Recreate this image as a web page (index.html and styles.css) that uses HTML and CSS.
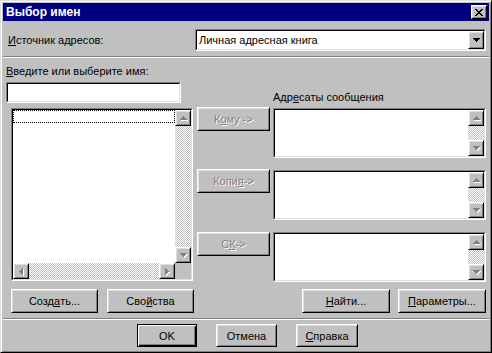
FILE: index.html
```html
<!DOCTYPE html>
<html lang="ru">
<head>
<meta charset="utf-8">
<title>Выбор имен</title>
<link rel="stylesheet" href="styles.css">
</head>
<body>
<div class="window">
  <div class="titlebar">
    <span class="title">Выбор имен</span>
    <div class="raised close">
      <svg width="8" height="7" viewBox="0 0 8 7"><path d="M0 0h2v1H0zM6 0h2v1H6zM1 1h2v1H1zM5 1h2v1H5zM2 2h4v1H2zM3 3h2v1H3zM2 4h4v1H2zM1 5h2v1H1zM5 5h2v1H5zM0 6h2v1H0zM6 6h2v1H6z" fill="#000"/></svg>
    </div>
  </div>
  <div class="body">
    <div class="source-row">
      <span class="label"><u>И</u>сточник адресов:</span>
      <div class="sunken combo">
        <div class="sunken-in combo-in">
          <span class="combo-text">Личная адресная книга</span>
          <div class="raised sbtn"><svg width="7" height="4" viewBox="0 0 7 4"><path d="M0 0h7v1H6v1H5v1H4v1H3V3H2V2H1V1H0z" fill="#000"/></svg></div>
        </div>
      </div>
    </div>
    <div class="sep"></div>
    <div class="main">
      <div class="col col-left">
        <div class="label lbl-enter"><u>В</u>ведите или выберите имя:</div>
        <div class="sunken input"><div class="sunken-in"></div></div>
        <div class="sunken list">
          <div class="sunken-in list-in">
            <div class="list-content"><div class="focus-row"></div></div>
            <div class="vscroll">
              <div class="raised sbtn sq"><svg class="dis" width="7" height="4" viewBox="0 0 7 4"><path d="M3 0h1v1h1v1h1v1h1v1H0V3h1V2h1V1h1z"/></svg></div>
              <div class="track"></div>
              <div class="raised sbtn sq"><svg class="dis" width="7" height="4" viewBox="0 0 7 4"><path d="M0 0h7v1H6v1H5v1H4v1H3V3H2V2H1V1H0z"/></svg></div>
            </div>
            <div class="hscroll">
              <div class="raised sbtn sq"><svg class="dis" width="4" height="7" viewBox="0 0 4 7"><path d="M3 0h1v7H3V6H2V5H1V4H0V3h1V2h1V1h1z"/></svg></div>
              <div class="track"></div>
              <div class="raised sbtn sq"><svg class="dis" width="4" height="7" viewBox="0 0 4 7"><path d="M0 0h1v1h1v1h1v1h1v1H3v1H2v1H1v1H0z"/></svg></div>
            </div>
            <div class="corner"></div>
          </div>
        </div>
        <div class="btnrow-left">
          <div class="raised btn w87">Созд<u>а</u>ть...</div>
          <div class="raised btn w87">Сво<u>й</u>ства</div>
        </div>
      </div>
      <div class="col col-mid">
        <div class="raised btn add add1 disabled">К<u>о</u>му -&gt;</div>
        <div class="raised btn add add2 disabled">Копи<u>я</u> -&gt;</div>
        <div class="raised btn add add3 disabled">С<u>К</u> -&gt;</div>
      </div>
      <div class="col col-right">
        <div class="label lbl-rcpt">Адр<u>е</u>саты сообщения</div>
        <div class="sunken rbox rbox1">
          <div class="sunken-in rbox-in">
            <div class="rbox-content"></div>
            <div class="vscroll">
              <div class="raised sbtn sq"><svg class="dis" width="7" height="4" viewBox="0 0 7 4"><path d="M3 0h1v1h1v1h1v1h1v1H0V3h1V2h1V1h1z"/></svg></div>
              <div class="track"></div>
              <div class="raised sbtn sq"><svg class="dis" width="7" height="4" viewBox="0 0 7 4"><path d="M0 0h7v1H6v1H5v1H4v1H3V3H2V2H1V1H0z"/></svg></div>
            </div>
          </div>
        </div>
        <div class="sunken rbox rbox2">
          <div class="sunken-in rbox-in">
            <div class="rbox-content"></div>
            <div class="vscroll">
              <div class="raised sbtn sq"><svg class="dis" width="7" height="4" viewBox="0 0 7 4"><path d="M3 0h1v1h1v1h1v1h1v1H0V3h1V2h1V1h1z"/></svg></div>
              <div class="track"></div>
              <div class="raised sbtn sq"><svg class="dis" width="7" height="4" viewBox="0 0 7 4"><path d="M0 0h7v1H6v1H5v1H4v1H3V3H2V2H1V1H0z"/></svg></div>
            </div>
          </div>
        </div>
        <div class="sunken rbox rbox3">
          <div class="sunken-in rbox-in">
            <div class="rbox-content"></div>
            <div class="vscroll">
              <div class="raised sbtn sq"><svg class="dis" width="7" height="4" viewBox="0 0 7 4"><path d="M3 0h1v1h1v1h1v1h1v1H0V3h1V2h1V1h1z"/></svg></div>
              <div class="track"></div>
              <div class="raised sbtn sq"><svg class="dis" width="7" height="4" viewBox="0 0 7 4"><path d="M0 0h7v1H6v1H5v1H4v1H3V3H2V2H1V1H0z"/></svg></div>
            </div>
          </div>
        </div>
        <div class="btnrow-right">
          <div class="raised btn w88"><u>Н</u>айти...</div>
          <div class="raised btn w88"><u>П</u>араметры...</div>
        </div>
      </div>
    </div>
    <div class="sep"></div>
    <div class="footer">
      <div class="raised btn default w60">OK</div>
      <div class="raised btn w61">Отмена</div>
      <div class="raised btn w62"><u>С</u>правка</div>
    </div>
  </div>
</div>
</body>
</html>
```

FILE: styles.css
```css
* { box-sizing: border-box; }
html, body { margin: 0; padding: 0; background: #c0c0c0; }
body {
  font-family: "Liberation Sans", Arial, sans-serif;
  font-size: 11px;
  color: #000;
}
u { text-decoration: underline; text-underline-offset: 1px; }

.window {
  width: 492px;
  height: 353px;
  background: #c0c0c0;
  border: 1px solid;
  border-color: #dfdfdf #000 #000 #dfdfdf;
  box-shadow: inset 1px 1px #fff, inset -1px -1px #808080;
  padding: 2px;
  display: flex;
  flex-direction: column;
}

.titlebar {
  height: 18px;
  flex: none;
  background: #000080;
  color: #fff;
  display: flex;
  align-items: center;
  justify-content: space-between;
  padding: 0 2px 0 3px;
}
.title { font-weight: bold; font-size: 12px; }

.raised {
  background: #c0c0c0;
  border: 1px solid;
  border-color: #fff #000 #000 #fff;
  box-shadow: inset 1px 1px #dfdfdf, inset -1px -1px #808080;
}
.close {
  width: 16px;
  height: 14px;
  display: flex;
  align-items: center;
  justify-content: center;
}
.close svg { display: block; }

.body { flex: 1; display: flex; flex-direction: column; }

.source-row {
  height: 35px;
  flex: none;
  display: flex;
  align-items: center;
  padding: 8px 3px 5px 5px;
}
.combo { margin-left: auto; width: 291px; height: 22px; }

.sunken {
  border: 1px solid;
  border-color: #808080 #fff #fff #808080;
}
.sunken-in {
  border: 1px solid;
  border-color: #000 #dfdfdf #dfdfdf #000;
  background: #fff;
  height: 100%;
}
.combo-in { display: flex; align-items: center; }
.combo-text { flex: 1; padding-left: 2px; }
.sbtn {
  width: 16px;
  height: 100%;
  display: flex;
  align-items: center;
  justify-content: center;
  flex: none;
}
.sbtn svg { display: block; }
.sbtn.sq { height: 16px; }
.dis { fill: #808080; filter: drop-shadow(1px 1px 0 #fff); }

.sep {
  height: 2px;
  flex: none;
  border-top: 1px solid #808080;
  border-bottom: 1px solid #fff;
}

.main {
  height: 260px;
  flex: none;
  display: grid;
  grid-template-columns: 188px 73px 213px;
  column-gap: 3px;
  padding-left: 3px;
}
.col { display: flex; flex-direction: column; align-items: flex-start; }

.label { line-height: 13px; height: 13px; white-space: nowrap; }
.lbl-enter { margin-top: 7px; }
.input { margin-top: 4px; width: 175px; height: 21px; }
.list { margin-top: 5px; margin-left: 5px; width: 182px; height: 173px; }
.list-in {
  display: grid;
  grid-template-columns: 1fr 16px;
  grid-template-rows: 1fr 16px;
}
.list-content { background: #fff; }
.focus-row { height: 13px; border: 1px dotted #000; }
.vscroll { display: flex; flex-direction: column; }
.hscroll { display: flex; flex-direction: row; }
.track {
  flex: 1;
  background: repeating-conic-gradient(#c0c0c0 0 25%, #fff 0 50%) 0 0 / 2px 2px;
}
.corner { background: #c0c0c0; }

.btn {
  height: 24px;
  display: flex;
  align-items: center;
  justify-content: center;
  white-space: nowrap;
}
.w87 { width: 87px; }
.w88 { width: 88px; }
.w60 { width: 60px; }
.w61 { width: 61px; }
.w62 { width: 62px; }
.btnrow-left { margin-top: 8px; margin-left: 5px; display: flex; gap: 9px; }

.add { width: 73px; }
.add1 { margin-top: 49px; }
.add2 { margin-top: 38px; }
.add3 { margin-top: 39px; }
.disabled { color: #808080; text-shadow: 1px 1px 0 #fff; }

.lbl-rcpt { margin-top: 33px; }
.rbox { width: 213px; height: 50px; }
.rbox1 { margin-top: 4px; }
.rbox2, .rbox3 { margin-top: 12px; }
.rbox-in { display: grid; grid-template-columns: 1fr 16px; }
.rbox-content { background: #fff; }
.btnrow-right {
  margin-top: 7px;
  align-self: stretch;
  display: flex;
  justify-content: flex-end;
  gap: 8px;
}

.footer {
  flex: 1;
  display: flex;
  justify-content: center;
  align-items: flex-start;
  gap: 19px;
  padding-top: 4px;
  padding-left: 3px;
}
.footer .btn { height: 23px; }
.default {
  border-color: #000;
  box-shadow: inset 1px 1px #fff, inset -1px -1px #000, inset -2px -2px #808080;
}
```
